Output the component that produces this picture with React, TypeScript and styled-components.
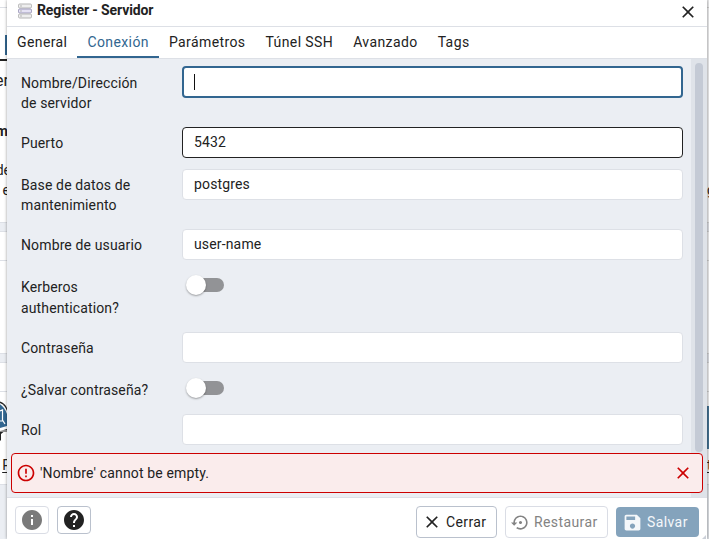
import React from 'react';
import styled, { createGlobalStyle, css } from 'styled-components';

const Global = createGlobalStyle`
  * { box-sizing: border-box; }
  html, body { margin: 0; height: 100%; overflow: hidden; }
  body, input, button { font-family: Roboto, "Liberation Sans", sans-serif; font-size: 14px; color: #222; }
`;

const Page = styled.div`
  width: 709px;
  height: 539px;
  display: grid;
  grid-template-columns: 7px 700px 2px;
  overflow: hidden;
  background: #fff;
`;

const Edge = styled.div<{ $right?: boolean }>`
  height: 539px;
  overflow: hidden;
  display: flex;
  flex-direction: column;
  align-items: ${p => (p.$right ? 'flex-start' : 'flex-end')};
  background: ${p => (p.$right ? '#e9e9ea' : '#fff')};
`;

const Block = styled.div<{ $h: number; $bg?: string; $top?: string; $bottom?: string }>`
  flex: none;
  width: 100%;
  height: ${p => p.$h}px;
  background: ${p => p.$bg || 'transparent'};
  border-top: ${p => (p.$top ? `1px solid ${p.$top}` : 'none')};
  border-bottom: ${p => (p.$bottom ? `1px solid ${p.$bottom}` : 'none')};
`;

const TabStub = styled.div`
  flex: none;
  width: 2px;
  height: 20px;
  background: #326690;
`;

const Snippet = styled.div<{ $h: number; $bold?: boolean; $link?: boolean; $size?: number; $shift?: number }>`
  flex: none;
  height: ${p => p.$h}px;
  line-height: ${p => p.$h}px;
  margin-right: ${p => -(p.$shift || 0)}px;
  font-size: ${p => p.$size || 14}px;
  font-weight: ${p => (p.$bold ? 700 : 400)};
  text-decoration: ${p => (p.$link ? 'underline' : 'none')};
  text-underline-offset: 2px;
  white-space: nowrap;
`;

const Dialog = styled.section`
  height: 539px;
  position: relative;
  display: flex;
  flex-direction: column;
  background: #ebeef3;
  box-shadow: 0 0 3px rgba(0, 0, 0, 0.4);
`;

const TitleBar = styled.header`
  height: 27px;
  flex: none;
  display: flex;
  align-items: flex-start;
  padding-left: 11px;
  background: #fff;
  border-bottom: 1px solid #dde0e6;
`;

const ServerIcon = styled.svg`
  width: 14px;
  height: 16px;
  margin-top: 3px;
`;

const Title = styled.h1`
  flex: 1;
  margin: 0 0 0 5px;
  font-size: 14px;
  line-height: 21px;
  font-weight: 700;
  letter-spacing: -0.11px;
`;

const Glyph = styled.svg<{ $size: number }>`
  width: ${p => p.$size}px;
  height: ${p => p.$size}px;
  flex: none;
  fill: currentColor;
`;

const PlainButton = styled.button<{ $danger?: boolean }>`
  border: 0;
  padding: 0;
  background: none;
  display: flex;
  color: ${p => (p.$danger ? '#cc0000' : '#222')};
  margin-right: 9px;
  margin-top: ${p => (p.$danger ? 0 : 2)}px;
`;

const TabBar = styled.nav`
  height: 32px;
  flex: none;
  display: flex;
  background: #fff;
  border-bottom: 1px solid #dde0e6;
`;

const Tab = styled.button<{ $active?: boolean }>`
  height: 31px;
  border: 0;
  padding: 0 10px;
  background: none;
  letter-spacing: 0.4px;
  line-height: 31px;
  white-space: nowrap;
  color: ${p => (p.$active ? '#326690' : '#222')};
  box-shadow: ${p => (p.$active ? 'inset 0 -2px #326690' : 'none')};
`;

const Body = styled.div`
  height: 438px;
  flex: none;
  display: grid;
  grid-template-columns: 1fr 16px;
  grid-template-rows: 394px 44px;
`;

const Form = styled.form`
  padding: 8px 8px 0 14px;
  overflow: hidden;
`;

const Row = styled.div<{ $h: number }>`
  height: ${p => p.$h}px;
  display: grid;
  grid-template-columns: 161px 501px;
  align-items: start;
`;

const Label = styled.label<{ $loose?: boolean }>`
  padding-top: 6px;
  line-height: ${p => (p.$loose ? 21 : 20)}px;
  letter-spacing: 0.13px;
  white-space: pre-line;
`;

const Input = styled.input<{ $state?: 'focus' | 'hover' }>`
  width: 501px;
  height: 31px;
  padding: 0 11px 2px;
  border: 1px solid #dde0e6;
  border-radius: 4px;
  background: #fff;
  letter-spacing: 0.15px;
  outline: none;
  ${p => p.$state === 'hover' && css`border-color: #222;`}
`;

const FocusedField = styled.div`
  height: 32px;
  width: 501px;
  margin-top: -1px;
  border: 2px solid #326690;
  border-radius: 4px;
  background: #fff;
  display: flex;
  align-items: center;
  padding-left: 10px;
`;

const Caret = styled.span`
  width: 1px;
  height: 16px;
  background: #111;
`;

const Switch = styled.div`
  width: 38px;
  height: 19px;
  margin: 4px 0 0 4px;
  display: flex;
  align-items: center;
  &::before {
    content: '';
    width: 20px;
    height: 20px;
    flex: none;
    border-radius: 50%;
    background: #fff;
    z-index: 1;
    box-shadow: 0 1px 2px rgba(0, 0, 0, 0.35);
  }
  &::after {
    content: '';
    width: 28px;
    height: 14px;
    flex: none;
    margin-left: -10px;
    border-radius: 7px;
    background: #929396;
  }
`;

const ScrollTrack = styled.div`
  background: #dfe3e9;
  padding: 4px 4px 0;
  grid-row: 1 / 3;
  grid-column: 2;
`;

const ScrollThumb = styled.div`
  width: 8px;
  height: 389px;
  border-radius: 4px;
  background: #c4cad5;
`;

const Alert = styled.div`
  grid-row: 2;
  grid-column: 1 / 3;
  z-index: 1;
  height: 40px;
  margin: 0 4px;
  padding-left: 4px;
  display: flex;
  align-items: center;
  border: 1px solid #cc0000;
  border-radius: 4px;
  background: #faecec;
  color: #cc0000;
`;

const AlertText = styled.span`
  flex: 1;
  margin-left: 4px;
  letter-spacing: 0.15px;
  color: #222;
`;

const Footer = styled.footer`
  height: 42px;
  flex: none;
  display: flex;
  align-items: flex-start;
  padding: 8px 8px 0;
  background: #fff;
  border-top: 1px solid #dde0e6;
`;

const IconButton = styled.button<{ $muted?: boolean }>`
  width: 34px;
  height: 28px;
  margin-right: 8px;
  padding: 0;
  display: grid;
  place-items: center;
  border: 1px solid ${p => (p.$muted ? '#dadde5' : '#bac1cd')};
  border-radius: 4px;
  background: #fff;
  color: ${p => (p.$muted ? '#7a7a7a' : '#222')};
`;

const Spacer = styled.div`
  flex: 1;
`;

const ActionButton = styled.button<{ $w: number; $kind?: 'muted' | 'primary' }>`
  width: ${p => p.$w}px;
  height: 32px;
  margin-left: 8px;
  padding: 0 0 0 5px;
  display: flex;
  align-items: center;
  gap: 4px;
  border: 1px solid #bac1cd;
  border-radius: 4px;
  background: #fff;
  letter-spacing: 0.4px;
  ${p => p.$kind === 'muted' && css`border-color: #dadde5; color: #838383;`}
  ${p => p.$kind === 'primary' && css`
    height: 30px;
    margin-top: 1px;
    padding-left: 6px;
    border: 0;
    background: #84a3bc;
    color: #f4f7fa;
  `}
`;

const ResizeGrip = styled.i`
  position: absolute;
  right: 1px;
  bottom: 0;
  border-left: 4px solid transparent;
  border-bottom: 4px solid #cbd0d8;
`;

const LogoEdge = styled.svg`
  flex: none;
  width: 7px;
  height: 44px;
`;

const CloseIcon = ({ size = 20 }: { size?: number }) => (
  <Glyph $size={size} viewBox="0 0 24 24">
    <path d="M19 6.41 17.59 5 12 10.59 6.41 5 5 6.41 10.59 12 5 17.59 6.41 19 12 13.41 17.59 19 19 17.59 13.41 12z" />
  </Glyph>
);

const ElephantEdge = () => (
  <LogoEdge viewBox="0 0 7 44">
    <path d="M0 0.5Q5 2 7 7V31H3.5L1 33V39L0 40Z" fill="#222" />
    <path d="M0 2Q5 4 7 10V28L0 30Z" fill="#fff" />
    <path d="M0 3.2Q4.5 6 7 13V25L0 27Z" fill="#326690" />
    <path d="M0 10L2.5 9V19L5 23M0 20H2.5M0 30H7" fill="none" stroke="#fff" strokeWidth="1.2" />
  </LogoEdge>
);

const tabs = ['General', 'Conexión', 'Parámetros', 'Túnel SSH', 'Avanzado', 'Tags'];

const fields = [
  { label: 'Nombre/Dirección\nde servidor', h: 60, type: 'focus' },
  { label: 'Puerto', h: 42, type: 'hover', value: '5432' },
  { label: 'Base de datos de\nmantenimiento', h: 60, value: 'postgres' },
  { label: 'Nombre de usuario', h: 42, value: 'user-name' },
  { label: 'Kerberos\nauthentication?', h: 61, type: 'switch', loose: true },
  { label: 'Contraseña', h: 42, value: '' },
  { label: '¿Salvar contraseña?', h: 40, type: 'switch' },
  { label: 'Rol', h: 32, value: '' },
];

const line = '#dde0e6';

export default function App() {
  return (
    <Page>
      <Global />
      <Edge>
        <Block $h={8} $bottom={line} />
        <Block $h={27} />
        <TabStub />
        <Block $h={4} />
        <Block $h={2} $bg="#222" />
        <Block $h={10} />
        <Snippet $h={20} $size={16} $shift={2}>er</Snippet>
        <Block $h={30} />
        <Snippet $h={20} $bold $shift={1}>m</Snippet>
        <Block $h={19} />
        <Snippet $h={20} $shift={4}>de</Snippet>
        <Snippet $h={20} $shift={3}>e</Snippet>
        <Block $h={22} />
        <Block $h={10} $bg="#ebeef3" $top={line} $bottom={line} />
        <Block $h={29} $bottom={line} />
        <Block $h={92} />
        <Block $h={10} $bg="#ebeef3" $top={line} $bottom={line} />
        <Block $h={29} $bottom={line} />
        <Block $h={9} />
        <ElephantEdge />
        <Block $h={10} />
        <Snippet $h={20} $link $shift={4}>P</Snippet>
        <Block $h={9} />
        <Block $h={55} $bg="#ebeef3" $top={line} />
      </Edge>
      <Dialog>
        <TitleBar>
          <ServerIcon viewBox="0 0 14 16" fill="#eee" stroke="#b5b5b5">
            <rect x=".5" y="1" width="13" height="4" rx="1.2" />
            <rect x=".5" y="6" width="13" height="4" rx="1.2" fill="#e5e2f4" stroke="#9c98b8" />
            <rect x=".5" y="11" width="13" height="4" rx="1.2" />
            <path d="M2 3h2M2 8h2M2 13h2" />
          </ServerIcon>
          <Title>Register - Servidor</Title>
          <PlainButton aria-label="Cerrar"><CloseIcon size={20} /></PlainButton>
        </TitleBar>
        <TabBar>
          {tabs.map(t => <Tab key={t} $active={t === 'Conexión'}>{t}</Tab>)}
        </TabBar>
        <Body>
          <Form>
            {fields.map(f => (
              <Row key={f.label} $h={f.h}>
                <Label $loose={f.loose}>{f.label}</Label>
                {f.type === 'switch' ? <Switch /> : f.type === 'focus' ? (
                  <FocusedField><Caret /></FocusedField>
                ) : (
                  <Input readOnly value={f.value} $state={f.type === 'hover' ? 'hover' : undefined} />
                )}
              </Row>
            ))}
          </Form>
          <ScrollTrack><ScrollThumb /></ScrollTrack>
          <Alert>
            <Glyph $size={20} viewBox="0 0 24 24">
              <path d="M11 15h2v2h-2zm0-8h2v6h-2zm.99-5C6.47 2 2 6.48 2 12s4.47 10 9.99 10C17.52 22 22 17.52 22 12S17.52 2 11.99 2M12 20c-4.42 0-8-3.58-8-8s3.58-8 8-8 8 3.58 8 8-3.58 8-8 8" />
            </Glyph>
            <AlertText>'Nombre' cannot be empty.</AlertText>
            <PlainButton $danger aria-label="Descartar"><CloseIcon /></PlainButton>
          </Alert>
        </Body>
        <Footer>
          <IconButton $muted aria-label="Información">
            <Glyph $size={24} viewBox="0 0 24 24">
              <path d="M12 2C6.48 2 2 6.48 2 12s4.48 10 10 10 10-4.48 10-10S17.52 2 12 2m1 15h-2v-6h2zm0-8h-2V7h2z" />
            </Glyph>
          </IconButton>
          <IconButton aria-label="Ayuda">
            <Glyph $size={24} viewBox="0 0 24 24">
              <path d="M12 2C6.48 2 2 6.48 2 12s4.48 10 10 10 10-4.48 10-10S17.52 2 12 2m1 17h-2v-2h2zm2.07-7.75-.9.92C13.45 12.9 13 13.5 13 15h-2v-.5c0-1.1.45-2.1 1.17-2.83l1.24-1.26c.37-.36.59-.86.59-1.41 0-1.1-.9-2-2-2s-2 .9-2 2H8c0-2.21 1.79-4 4-4s4 1.79 4 4c0 .88-.36 1.68-.93 2.25" />
            </Glyph>
          </IconButton>
          <Spacer />
          <ActionButton $w={81}><CloseIcon />Cerrar</ActionButton>
          <ActionButton $w={103} $kind="muted">
            <Glyph $size={19} viewBox="0 0 24 24">
              <path d="M14 12c0-1.1-.9-2-2-2s-2 .9-2 2 .9 2 2 2 2-.9 2-2m-2-9c-4.97 0-9 4.03-9 9H0l4 4 4-4H5c0-3.87 3.13-7 7-7s7 3.13 7 7-3.13 7-7 7c-1.51 0-2.91-.49-4.06-1.3l-1.42 1.44C8.04 20.3 9.94 21 12 21c4.97 0 9-4.03 9-9s-4.03-9-9-9" />
            </Glyph>
            Restaurar
          </ActionButton>
          <ActionButton $w={83} $kind="primary">
            <Glyph $size={21} viewBox="0 0 24 24">
              <path d="M17 3H5c-1.11 0-2 .9-2 2v14c0 1.1.89 2 2 2h14c1.1 0 2-.9 2-2V7zm-5 16c-1.66 0-3-1.34-3-3s1.34-3 3-3 3 1.34 3 3-1.34 3-3 3m3-10H5V5h10z" />
            </Glyph>
            Salvar
          </ActionButton>
        </Footer>
        <ResizeGrip />
      </Dialog>
      <Edge $right>
        <Block $h={8} $bottom="#ccc" />
        <Block $h={172} />
        <Snippet $h={20}>g</Snippet>
        <Block $h={22} />
        <Block $h={10} $bg="#d8dadf" $top="#ccc" $bottom="#ccc" />
        <Block $h={29} $bottom="#ccc" />
        <Block $h={92} />
        <Block $h={10} $bg="#d8dadf" $top="#ccc" $bottom="#ccc" />
        <Block $h={29} $bottom="#ccc" />
        <Block $h={14} />
        <Block $h={43} $bg="#44708f" />
        <Block $h={6} />
        <Snippet $h={20} $link>t</Snippet>
        <Block $h={9} />
        <Block $h={55} $bg="#dadde2" $top="#ccc" />
      </Edge>
    </Page>
  );
}
